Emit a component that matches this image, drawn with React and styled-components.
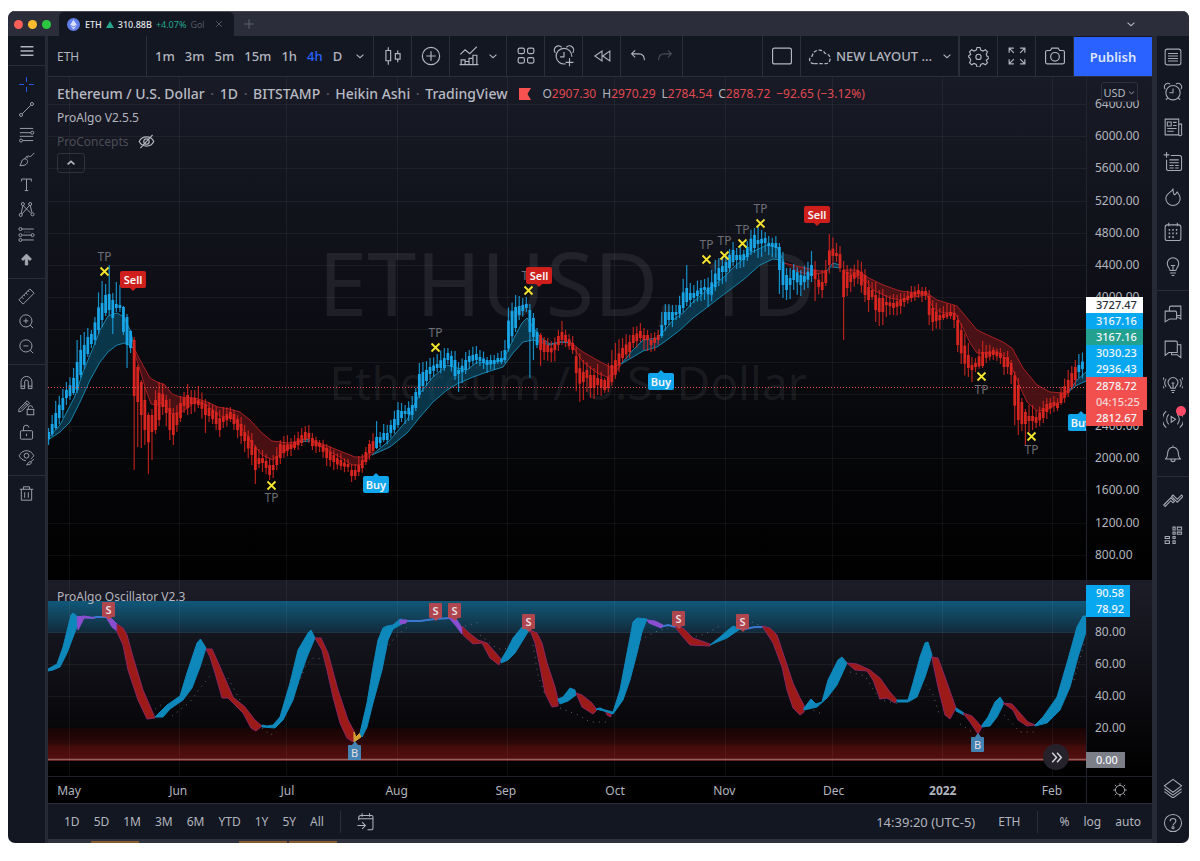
import React from "react";
import styled, { createGlobalStyle } from "styled-components";

const GlobalStyle = createGlobalStyle`
	* {
		box-sizing: border-box;
	}

	body {
		margin: 0;
		background: #ffffff;
		font-family: "Noto Sans", "Open Sans", sans-serif;
		color: #b2b5be;
	}

	button {
		font: inherit;
		color: inherit;
		background: none;
		border: 0;
		padding: 0;
		cursor: pointer;
	}
`;

// Line icons, all drawn on a 28px grid
const icons = {
	menu: <path d='M5 8h18M5 14h18M5 20h18' strokeWidth='2' />,
	cross: <path d='M14 2v8M14 18v8M2 14h8M18 14h8' />,
	line: (
		<>
			<circle cx='5' cy='23' r='2.5' />
			<circle cx='23' cy='5' r='2.5' />
			<path d='M7 21 21 7' />
		</>
	),
	fib: (
		<>
			<path d='M3 4h22M3 11h18M3 17h22M8 24h17' />
			<circle cx='23.5' cy='11' r='2.5' />
			<circle cx='5' cy='24' r='2.5' />
		</>
	),
	brush: (
		<path d='M3 24c3-2 2-10 7-11 5-.5 7 3 5 7-2 4-7 4-12 4zM16 12c-1-5 2-5 4-2l7-7M11 13l4-5' />
	),
	text: <path d='M6 9V5h16v4M14 5v19M11 24h6' />,
	pattern: (
		<>
			<path d='M5 21 8 8M9 8l12 12M19 7 7 21M20 7l3 12' />
			<circle cx='8' cy='5' r='2.5' />
			<circle cx='20' cy='5' r='2.5' />
			<circle cx='4.5' cy='23' r='2.5' />
			<circle cx='24' cy='22' r='2.5' />
		</>
	),
	forecast: (
		<>
			<path d='M6 5h20M7 15h15M7 23h19' />
			<path d='M10 10h10' strokeDasharray='1 2' />
			<circle cx='4' cy='5' r='2.5' />
			<circle cx='4' cy='15' r='2.5' />
			<circle cx='4' cy='23' r='2.5' />
			<circle cx='24' cy='15' r='2.5' />
		</>
	),
	arrow: <path d='M14 5 6 13l2 2.5 4-3V23h4V12.500l4 3 2-2.500z' fill='currentColor' />,
	ruler: (
		<path d='M1.5 19.5 19.5 1.5l7 7-18 18zM6 15l3 3M9.5 11.500l2 2M13 8l3 3M16.500 4.500l2 2' />
	),
	zoomIn: (
		<>
			<circle cx='13' cy='13' r='10' />
			<path d='M13 9v8M9 13h8M20 20l5 5' />
		</>
	),
	zoomOut: (
		<>
			<circle cx='13' cy='13' r='10' />
			<path d='M9 13h8M20 20l5 5' />
		</>
	),
	magnet: (
		<path d='M5 24V13a9 9 0 0 1 18 0v11h-6V13a3 3 0 0 0-6 0v11zM5 20h6M17 20h6' />
	),
	pencilLock: (
		<>
			<path d='M2 16 15 3l4 4L6 20l-5 1zM12 6l4 4M5 17 15 7' />
			<rect x='15' y='17' width='11' height='9' />
			<path d='M17 17v-2.5a3.500 3.500 0 0 1 7 0' />
		</>
	),
	lock: (
		<>
			<rect x='4' y='11' width='20' height='14' rx='2' />
			<path d='M9 11V7a4.500 4.500 0 0 1 9-1M14 16v4' />
		</>
	),
	eyeBrush: (
		<>
			<path d='M2 11c5-11 19-11 24 0-2 3-3 4-5 5.500M2 11c2 5 6 8 11 8' />
			<circle cx='14' cy='11' r='4' />
			<path d='M14 26c2 0 2-5 6-5s3 5-6 5zM21 21l5-4' />
		</>
	),
	trash: (
		<path d='M3 7h22M9 7V3h10v4M5.500 7v18h17V7M11 12v9M17 12v9' />
	),
	candles: (
		<path d='M8 3v4M8 20v5M5 7h6v13H5zM20 7v4M20 18v4M17 11h6v7h-6z' />
	),
	plusCircle: (
		<>
			<circle cx='14' cy='14' r='11' />
			<path d='M14 8v12M8 14h12' />
		</>
	),
	indicators: (
		<path d='M3 12l6-6 6 5 9-9M4 25v-6h5v6M9 25v-4h5v4M14 25v-8h5v8M19 25V13h5v12M2 25h24' />
	),
	grid: (
		<>
			<rect x='4' y='4' width='8' height='7' rx='2' />
			<rect x='16' y='4' width='8' height='7' rx='2' />
			<rect x='4' y='16' width='8' height='7' rx='2' />
			<rect x='16' y='16' width='8' height='7' rx='2' />
		</>
	),
	alarmPlus: (
		<>
			<path d='M16 24a10 10 0 1 1 8-9M14 9v6H9M21 17v10M16 22h10' />
			<path d='M3 10a5 5 0 0 1 8-7M25 10a5 5 0 0 0-8-7' />
		</>
	),
	replay: <path d='M14 7v14l-10-7zM25 7v14l-10-7z' />,
	undo: <path d='M10 6 5 11l5 5M5 11h10c5 0 8 3 8 9' />,
	redo: <path d='m18 6 5 5-5 5M23 11H13c-5 0-8 3-8 9' />,
	rect: <rect x='2' y='4' width='24' height='20' rx='2.5' />,
	cloud: (
		<path
			d='M7 23c-6 0-7-7-2-9 1-8 12-9 15-3 7 0 8 11 1 12z'
			strokeDasharray='4 2'
		/>
	),
	gear: (
		<>
			<path d='M12 2h4l1 3.500 3 1.200 3.200-1.700 2.800 2.800-1.700 3.200 1.200 3 3.500 1v0l-3.500 3-1.200 1 1.700 3.200-2.800 2.800-3.200-1.700-3 1.200-1 3.500h-4l-1-3.500-3-1.200L4.800 25 2 22.200 3.700 19l-1.200-3L0 14l2.500-2 1.200-1L2 7.800 4.800 5 8 6.700l3-1.200z' />
			<circle cx='14' cy='14.5' r='3.5' />
		</>
	),
	expand: (
		<path d='M4 10V4h6M4 4l6 6M18 4h6v6M24 4l-6 6M4 18v6h6M4 24l6-6M24 18v6h-6M24 24l-6-6' />
	),
	camera: (
		<>
			<path d='M4 7h4l2-3h8l2 3h4a2 2 0 0 1 2 2v13a2 2 0 0 1-2 2H4a2 2 0 0 1-2-2V9a2 2 0 0 1 2-2z' />
			<circle cx='14' cy='15' r='5.500' />
		</>
	),
	list: (
		<>
			<rect x='3' y='3' width='22' height='22' rx='3' />
			<path d='M7 9h14M7 12.500h14M7 16h14M7 19.500h14' />
		</>
	),
	alarm: (
		<>
			<circle cx='14' cy='15' r='10' />
			<path d='M14 9v6H9M7 22l-3 3M21 22l3 3M3 10a5 5 0 0 1 7-7M25 10a5 5 0 0 0-7-7' />
		</>
	),
	news: (
		<>
			<path d='M3 3h19v22H3zM22 10h4v13a2 2 0 0 1-4 2' />
			<path d='M6 7h5.500v5.500H6zM14 7.500h5M14 12h5M6 16h13M6 20h9' />
		</>
	),
	details: (
		<>
			<path d='M11 5h12a3 3 0 0 1 3 3v15a3 3 0 0 1-3 3H8a3 3 0 0 1-3-3V11M5 0v8M1 4h8' />
			<path d='M9 11h13M9 15h13M9 19h6M17 19h5M9 22.500h6M17 22.500h5' />
		</>
	),
	fire: (
		<path d='M14 2c0 5-10 6-10 14a10 10 0 0 0 20 0c0-4-2-6-4-9-1 1-2 3-4 4-2-2-2-5-2-9z' />
	),
	calendar: (
		<>
			<rect x='3' y='4' width='22' height='22' rx='3' />
			<path d='M8 1v5M20 1v5' />
			<path
				d='M8 11h2M13 11h2M18 11h2M8 16h2M13 16h2M18 16h2M8 21h2M13 21h2'
				strokeWidth='2.500'
			/>
		</>
	),
	bulb: (
		<path d='M10 19c0-3-4-5-4-10a8 8 0 0 1 16 0c0 5-4 7-4 10zM10 22.500h8M12 26h4M14 19v-7M11 12h6' />
	),
	chats: (
		<path d='M3 10h14a2 2 0 0 1 2 2v9H9l-6 4zM9 10V5a2 2 0 0 1 2-2h14v18l-5-3M19 16h6' />
	),
	chat: <path d='M3 3h15a2 2 0 0 1 2 2v14H8l-5 4zM20 8h5v18l-5-4H12v-3' />,
	bulbWave: (
		<path d='M11 20c0-3-4-4-4-8a7 7 0 0 1 14 0c0 4-4 5-4 8zM11 23h6M12.500 26h3M14 20v-7M12 12.500h4M4.500 7a9 9 0 0 0 0 11M23.500 7a9 9 0 0 1 0 11M1.500 5a13 13 0 0 0 0 15M26.500 5a13 13 0 0 1 0 15' />
	),
	stream: (
		<path d='M11.500 10.500v8l6-4zM8 7.500a10 10 0 0 0 0 14M20 7.500a10 10 0 0 1 0 14M4.500 3a15 15 0 0 0 0 23M23.500 3a15 15 0 0 1 0 23' />
	),
	bell: (
		<path d='M3 21c4-2 3-7 4-11 1-3 3-5.500 7-5.500s6 2.500 7 5.500c1 4 0 9 4 11zM11 21c0 5 6 5 6 0M14 2v2.500' />
	),
	waves: (
		<path d='m1 21 10-10 5 5-2 2-3-3-8 8zM12 9l2-2 6 6 6-6 2 2-8 8z' />
	),
	dom: (
		<path d='M14 3h3v4h-3zM20 3h6v4h-6zM14 10h3v3h-3zM20 10h6v3h-6zM3 16h6v3H3zM14 16h3v3h-3zM3 22h6v4H3zM14 22h3v4h-3z' />
	),
	layers: (
		<path d='m14 2 12 9-12 9-12-9zM2 15l12 9 12-9M2 19l12 9 12-9' />
	),
	help: (
		<>
			<circle cx='14' cy='14' r='12' />
			<path d='M10 11.500c0-5 8-5 8 0 0 3-4 3-4 6' />
			<circle cx='14' cy='20.500' r='1.500' />
		</>
	),
	goto: (
		<path d='M4 12V8a3 3 0 0 1 3-3h16a2 2 0 0 1 2 2v17a2 2 0 0 1-2 2h-6M4 10h21M9 2v5M20 2v5M2 20h11M9 15l5 5-5 5' />
	),
	sun: (
		<>
			<circle cx='14' cy='14' r='8' />
			<path d='M14 2v4M14 22v4M2 14h4M22 14h4M5 5l3 3M20 20l3 3M23 5l-3 3M8 20l-3 3' />
		</>
	),
	hidden: (
		<>
			<path d='M2 14c5-10 19-10 24 0-5 10-19 10-24 0zM4 25 24 3' strokeWidth='2' />
			<circle cx='14' cy='14' r='4.5' strokeWidth='2' />
		</>
	),
	down: <path d='m6 11 8 7 8-7' strokeWidth='2.5' />,
	up: <path d='m6 17 8-7 8 7' strokeWidth='4' />,
	close: <path d='m6 6 16 16M22 6 6 22' strokeWidth='2' />,
	plus: <path d='M14 3v22M3 14h22' strokeWidth='2' />,
	next: <path d='m6 5 8 9-8 9M15 5l8 9-8 9' strokeWidth='2.8' />,
};

const Icon = ({ name, size = 22 }) => (
	<IconSvg viewBox='0 0 28 28' width={size} height={size} aria-hidden='true'>
		{icons[name]}
	</IconSvg>
);

const months = ["May", "Jun", "Jul", "Aug", "Sep", "Oct", "Nov", "Dec", "2022", "Feb"];
const monthLines = [69, 179, 286, 397, 507, 614, 725, 832, 942, 1052];
const DAY = 3.565;

// x, body top, body bottom, wick top, wick bottom
const candleKeys = [
	[48, 432, 439, 428, 443], [52, 424, 434, 415, 436], [56, 413, 428, 403, 430],
	[62, 398, 410, 390, 418], [68, 390, 398, 382, 403], [73, 378, 393, 370, 395],
	[76, 362, 390, 340, 392], [80, 350, 375, 336, 378], [84, 345, 365, 332, 367],
	[88, 337, 354, 328, 357], [93, 334, 344, 332, 348], [97, 310, 336, 301, 340],
	[101, 303, 320, 281, 325], [105, 295, 313, 284, 316], [108, 294, 310, 267, 315],
	[112, 300, 318, 293, 333], [115, 304, 308, 283, 312], [119, 305, 308, 285, 310],
	[123, 307, 332, 306, 335], [126, 317, 345, 316, 368], [130, 331, 348, 330, 352],
	[133, 340, 396, 338, 470], [137, 367, 402, 365, 445], [140, 382, 415, 380, 448],
	[144, 400, 430, 390, 445], [147, 415, 448, 414, 480], [151, 415, 432, 410, 460],
	[155, 400, 430, 390, 432], [159, 393, 420, 382, 426], [162, 394, 407, 385, 415],
	[166, 400, 413, 395, 425], [170, 408, 430, 400, 440], [173, 414, 435, 408, 443],
	[177, 413, 425, 405, 432], [181, 403, 418, 398, 422], [185, 398, 406, 392, 412],
	[187, 395, 408, 385, 415], [192, 398, 404, 390, 412], [200, 400, 405, 388, 408],
	[205, 404, 415, 400, 433], [211, 408, 416, 402, 420], [215, 412, 424, 408, 430],
	[219, 418, 430, 410, 436], [224, 417, 422, 408, 428], [229, 412, 419, 407, 422],
	[235, 414, 424, 412, 430], [240, 424, 436, 418, 444], [245, 432, 441, 425, 450],
	[251, 440, 455, 435, 465], [254, 447, 470, 445, 483], [258, 458, 464, 450, 468],
	[264, 458, 463, 450, 470], [269, 465, 475, 460, 480], [272, 465, 470, 455, 477],
	[276, 456, 465, 448, 470], [280, 444, 458, 440, 462], [284, 445, 453, 436, 458],
	[290, 444, 449, 438, 455], [296, 442, 448, 436, 450], [300, 435, 443, 428, 446],
	[306, 432, 440, 428, 442], [309, 433, 439, 425, 442], [313, 438, 446, 434, 450],
	[320, 443, 447, 440, 452], [327, 448, 458, 444, 465], [333, 455, 462, 450, 468],
	[340, 460, 466, 455, 470], [347, 464, 467, 460, 472], [354, 470, 476, 464, 480],
	[360, 465, 472, 458, 476], [366, 452, 462, 448, 465], [371, 444, 453, 440, 458],
	[376, 437, 448, 423, 449], [380, 437, 443, 432, 446], [385, 433, 440, 425, 442],
	[392, 425, 433, 420, 438], [398, 410, 425, 402, 427], [402, 411, 418, 404, 422],
	[406, 411, 414, 405, 422], [411, 405, 415, 398, 420], [415, 392, 408, 388, 410],
	[419, 374, 395, 364, 398], [424, 372, 386, 362, 390], [430, 367, 374, 360, 380],
	[437, 364, 368, 355, 372], [443, 358, 368, 348, 371], [449, 353, 360, 350, 364],
	[455, 360, 376, 352, 380], [460, 370, 374, 362, 390], [465, 360, 370, 354, 374],
	[470, 356, 362, 350, 368], [475, 354, 360, 346, 362], [480, 357, 361, 350, 366],
	[487, 360, 365, 357, 372], [493, 360, 364, 355, 368], [500, 358, 362, 353, 364],
	[504, 350, 360, 340, 362], [507, 327, 355, 309, 358], [510, 314, 342, 308, 345],
	[515, 307, 328, 295, 332], [520, 306, 315, 298, 320], [525, 304, 308, 298, 312],
	[529, 310, 332, 304, 376], [533, 318, 337, 313, 360], [537, 332, 345, 330, 348],
	[540, 335, 350, 333, 365], [544, 340, 352, 338, 360], [550, 348, 352, 338, 358],
	[553, 348, 353, 345, 368], [558, 336, 345, 330, 350], [561, 332, 340, 322, 345],
	[566, 335, 342, 330, 345], [572, 343, 350, 338, 354], [575, 350, 365, 345, 380],
	[578, 365, 385, 350, 405], [582, 372, 382, 360, 398], [587, 370, 378, 362, 392],
	[592, 375, 388, 368, 398], [598, 378, 385, 365, 395], [604, 380, 390, 378, 393],
	[609, 377, 388, 365, 392], [613, 365, 382, 350, 385], [617, 357, 370, 340, 375],
	[622, 348, 358, 338, 362], [629, 342, 352, 335, 357], [635, 335, 343, 328, 348],
	[640, 331, 338, 323, 342], [646, 335, 340, 330, 350], [652, 340, 345, 334, 352],
	[658, 335, 340, 330, 345], [661, 325, 336, 314, 338], [666, 312, 325, 304, 330],
	[670, 312, 320, 305, 325], [678, 312, 315, 305, 320], [682, 295, 312, 287, 315],
	[685, 288, 302, 266, 306], [690, 293, 300, 283, 305], [695, 293, 298, 285, 303],
	[700, 288, 294, 280, 300], [705, 287, 290, 280, 300], [710, 288, 297, 276, 308],
	[713, 278, 293, 265, 296], [718, 268, 280, 258, 285], [724, 266, 272, 258, 284],
	[728, 258, 272, 252, 275], [732, 250, 262, 244, 266], [738, 255, 260, 248, 268],
	[745, 254, 260, 250, 265], [749, 242, 255, 235, 258], [753, 235, 248, 228, 252],
	[758, 240, 244, 228, 258], [765, 238, 243, 232, 252], [770, 243, 246, 238, 255],
	[776, 243, 248, 237, 258], [779, 247, 270, 243, 292], [782, 262, 285, 252, 298],
	[786, 275, 290, 270, 300], [790, 278, 285, 268, 298], [795, 270, 280, 265, 290],
	[800, 275, 285, 270, 296], [806, 276, 282, 268, 290], [811, 265, 276, 252, 282],
	[814, 266, 276, 254, 303], [817, 278, 285, 274, 292], [821, 282, 290, 272, 298],
	[825, 270, 283, 260, 285], [828, 254, 272, 236, 278], [831, 246, 256, 234, 268],
	[836, 253, 256, 243, 262], [839, 254, 268, 248, 272], [843, 270, 297, 261, 339],
	[846, 272, 288, 266, 296], [851, 275, 282, 268, 290], [857, 270, 276, 262, 284],
	[860, 270, 280, 257, 286], [864, 275, 295, 270, 302], [868, 287, 300, 280, 310],
	[872, 290, 297, 282, 300], [875, 295, 310, 284, 322], [881, 298, 312, 290, 325],
	[888, 302, 305, 295, 315], [893, 303, 308, 296, 315], [900, 300, 306, 294, 314],
	[905, 298, 302, 293, 305], [911, 293, 298, 288, 302], [918, 290, 294, 285, 298],
	[924, 291, 295, 287, 300], [929, 296, 315, 292, 325], [934, 308, 322, 300, 330],
	[939, 315, 320, 308, 327], [945, 314, 318, 306, 320], [950, 312, 316, 305, 318],
	[955, 313, 320, 306, 328], [959, 320, 345, 315, 350], [963, 338, 360, 330, 375],
	[967, 355, 368, 343, 376], [972, 365, 370, 358, 382], [976, 363, 367, 358, 370],
	[981, 352, 366, 343, 368], [987, 352, 358, 345, 362], [994, 350, 355, 347, 358],
	[1000, 353, 358, 350, 364], [1006, 357, 367, 352, 374], [1011, 363, 375, 360, 382],
	[1013, 368, 395, 365, 418], [1017, 385, 420, 380, 435], [1021, 402, 424, 398, 430],
	[1025, 412, 424, 410, 445], [1031, 416, 421, 405, 430], [1037, 417, 423, 412, 428],
	[1042, 408, 418, 402, 423], [1048, 404, 412, 398, 417], [1052, 402, 406, 398, 412],
	[1058, 403, 408, 398, 410], [1062, 393, 403, 388, 405], [1067, 380, 393, 370, 397],
	[1071, 373, 387, 368, 390], [1075, 367, 380, 360, 385], [1079, 365, 372, 355, 378],
	[1086, 358, 366, 350, 375],
];

const bullRanges = [[0, 132], [374, 538], [660, 815], [1077, 1100]];

const buildCandles = () => {
	const list = [];
	let k = 0;
	for (let i = 0; i < 291; i++) {
		const x = 48.6 + i * DAY;
		while (k < candleKeys.length - 2 && candleKeys[k + 1][0] < x) k++;
		const a = candleKeys[k];
		const b = candleKeys[k + 1];
		const t = Math.max(0, Math.min(1, (x - a[0]) / (b[0] - a[0])));
		// snap towards the closest key so that single spikes keep their height
		const s = t < 0.35 ? 0 : t > 0.65 ? 1 : t;
		const mix = (n) => a[n] + (b[n] - a[n]) * s;
		const wobble = ((i * 7) % 5) - 2;
		list.push({
			x: x,
			top: mix(1),
			bottom: Math.max(mix(2), mix(1) + 3),
			high: mix(3) - Math.max(0, wobble),
			low: mix(4) + Math.max(0, -wobble),
			bull: bullRanges.some(([from, to]) => x > from && x < to),
		});
	}
	return list;
};

const candles = buildCandles();

const ribbons = [
	{
		bull: true,
		top: "48,438 60,425 75,396 83,372 93,348 100,330 108,316 117,313 124,317 131,332 134,347",
		bottom: "134,349 131,346 125,343 117,345 108,352 100,362 90,380 80,402 70,422 60,432 48,440",
	},
	{
		top: "133,346 140,360 150,378 157,382 165,385 172,394 180,397 195,398 207,402 218,407 230,409 240,412 250,420 262,433 272,441 280,442 288,443 300,441",
		bottom: "300,441 295,445 283,452 273,460 262,455 252,443 243,430 232,418 220,416 205,404 195,402 182,412 172,414 162,403 157,405 151,404 146,390 140,370 133,348",
	},
	{ bull: true, top: "300,441 305,439 310,440", bottom: "310,441 300,442" },
	{
		top: "311,440 325,445 340,451 355,457 362,457 372,452",
		bottom: "372,454 360,465 352,465 340,457 325,449 311,441",
	},
	{
		bull: true,
		top: "372,455 390,440 407,420 420,393 433,377 447,365 457,368 467,370 477,362 487,363 503,360 513,340 522,323 527,318 533,327 540,337 550,344 560,342 571,342",
		bottom: "571,343 560,342 550,345 543,343 533,340 523,342 513,353 503,367 487,372 473,377 457,384 447,390 433,402 420,417 407,433 390,447 372,455",
	},
	{
		top: "570,342 583,352 597,360 610,367 615,367 621,363",
		bottom: "621,365 613,375 607,377 597,373 583,362 573,347",
	},
	{
		bull: true,
		top: "621,364 633,350 643,340 657,338 663,332 673,320 683,313 693,302 707,290 723,278 733,268 750,253 767,245 777,247 784,262",
		bottom: "784,263 780,260 773,259 760,265 743,280 723,295 710,305 693,318 680,330 667,340 657,347 643,351 633,357 621,364",
	},
	{ top: "784,263 800,267 820,271 827,271", bottom: "827,272 810,275 793,270" },
	{ bull: true, top: "827,271 833,263 840,265", bottom: "840,268 833,267" },
	{
		top: "843,270 857,270 867,277 883,285 900,291 917,293 927,293 937,300 957,306 967,318 977,330 990,336 1003,342 1012,348 1023,368 1037,385 1050,392 1063,393 1068,391",
		bottom: "1068,392 1060,402 1047,410 1037,411 1027,402 1020,387 1010,363 1000,353 990,353 977,353 970,343 963,328 955,313 943,313 933,308 927,295 913,297 900,300 890,298 873,290 867,282 857,277 843,271",
	},
	{ bull: true, top: "1068,392 1077,380 1086,372", bottom: "1086,381 1077,385 1068,392" },
];

const takeProfits = [
	[104, 271, 257], [271, 485, 498], [435, 347, 333], [528, 290, 276], [706, 259, 245],
	[724, 255, 241], [742, 243, 230], [760, 223, 209], [981, 376, 390], [1031, 436, 450],
];

const signals = [
	["Sell", 133, 280], ["Sell", 539, 276], ["Sell", 817, 215],
	["Buy", 376, 485], ["Buy", 661, 382], ["Buy", 1081, 423],
];

const BLUE = "#0e87bb";
const RED = "#9c1a18";
const PURPLE = "#8a4fd0";

const waves = [
	[BLUE, "48,669 57,664 63,647 71,615 73,613 78,617 78,624 67,653 60,667 53,670 48,671"],
	[PURPLE, "77,617 84,616 90,617 95,618 84,618 78,630"],
	[PURPLE, "106,617 112,619 117,624 118,632 112,627"],
	[RED, "117,624 123,628 127,635 133,657 143,690 153,713 155,718 147,719 138,700 128,670 123,645 117,632"],
	[BLUE, "155,717 167,705 180,696 187,673 197,643 200.5,639 206,648 200,667 192,688 183,700 170,709 163,717"],
	[RED, "206,649 212,649 217,660 227,683 233,697 245,707 255,720 262,726 256,731 251,728 243,713 235,705 228,698 222,698 215,673 210,657"],
	[BLUE, "262,725 267,726 273,725 280,717 290,683 298,650 308,633 311,630 315,638 307,657 300,677 293,700 283,720 275,728 262,727"],
	[RED, "315,638 321,638 328,653 338,690 348,720 355,733 353,742 347,738 340,723 333,697 327,670 322,650"],
	["#d3a031", "354,732 356,737 361,732 361,737 354,742"],
	[BLUE, "360,733 367,703 373,667 378,640 383,628 387,626 393,625 400,619 407,621 400,625 393,629 388,640 382,670 373,703 367,727 362,737"],
	[PURPLE, "400,620 407,620 406,623 400,624"],
	[PURPLE, "449,618 457,620 462,628 462,634 456,626 450,619"],
	[RED, "462,626 468,632 478,640 487,643 495,652 501,659 499,665 490,658 482,643 473,644 463,635"],
	[BLUE, "501,660 507,650 513,638 522,627 526,624 529,630 523,640 515,653 508,660 501,663"],
	[RED, "530,630 537,633 542,643 547,663 555,687 558,700 558,706 552,707 545,693 540,667 535,643"],
	[BLUE, "558,699 563,697 570,688 575,690 576,695 568,701 560,704"],
	[RED, "576,693 582,695 592,703 597,710 593,714 582,707"],
	[RED, "605,710 611,714 611,717 607,715"],
	[BLUE, "596,709 600,708 605,710 613,712 620,690 627,653 633,622 637,618 647,619 642,632 637,653 630,680 623,700 613,714 604,711 600,710"],
	[PURPLE, "647,620 655,621 663,625 661,628 649,623"],
	[RED, "675,627 683,628 693,638 710,644 710,646 690,645 683,637"],
	[BLUE, "710,645 720,637 728,630 733,626 740,629 727,638 717,642"],
	[RED, "762,626 770,628 777,635 783,653 793,683 800,698 804,705 804,712 800,715 793,708 787,690 782,667 773,643"],
	[BLUE, "804,708 811,699 816,704 822,702 828,680 838,660 842,657 847,663 837,685 827,698 817,707 804,710"],
	[RED, "847,663 857,664 870,670 880,678 890,692 897,700 895,703 887,698 880,699 873,680 867,671 855,670"],
	[BLUE, "897,700 908,700 913,683 920,657 925,643 928,642 932,655 925,677 917,697 908,702 897,702"],
	[RED, "932,657 938,658 945,677 952,697 956,708 950,719 945,715 938,687 933,663"],
	[BLUE, "956,708 964,713 964,715 956,711"],
	[RED, "963,713 972,716 982,727 978,734 970,722"],
	[BLUE, "982,725 988,717 995,702 1000,697 1004,703 997,717 990,726 982,727"],
	[RED, "1003,703 1012,704 1020,713 1028,722 1035,725 1027,726 1018,720 1013,710"],
	[BLUE, "1035,725 1043,717 1057,697 1067,663 1077,627 1083,616 1086,616 1086,632 1078,657 1070,687 1060,710 1047,723 1035,726"],
];

// stretches where both lines of the oscillator run together
const thinLines = [
	"78,617 84,617 92,618 96,617 108,617",
	"405,621 420,621 435,619 450,618",
	"660,627 668,625 676,627",
	"738,629 745,629 755,627 764,627",
];

const dotTrails = [
	"155,709 165,702", "172,716 190,702 200,688 211,675", "228,678 240,700 250,722",
	"262,728 270,735 277,732", "290,700 300,680 306,665 313,658 322,659", "382,655 395,637 410,625",
	"465,626 480,622", "480,635 492,645 502,650 515,645", "533,645 538,675 545,695",
	"560,708 578,715 590,722 610,722", "640,640 655,632 668,628", "690,638 705,634 720,626",
	"752,622 765,628", "808,708 822,714", "850,672 865,676 880,700 900,704", "922,680 932,692 940,716",
	"960,724 975,734", "1004,715 1020,732 1035,732", "1074,680 1085,640",
];

const ratings = [
	["S", 108, 609], ["S", 435, 610], ["S", 454, 610], ["S", 528, 621],
	["S", 678, 618], ["S", 742, 621], ["B", 354, 752], ["B", 977, 744],
];

const GridLines = ({ from, to, rows }) => (
	<g stroke='#ffffff' strokeOpacity='0.05'>
		{monthLines.map((x) => (
			<path key={x} d={`M${x + 0.5} ${from}V${to}`} />
		))}
		{rows.map((y) => (
			<path key={y} d={`M48 ${y}H1086`} />
		))}
	</g>
);

const PriceChart = () => (
	<ChartSvg viewBox='48 77 1038 503' role='img' aria-label='ETHUSD price'>
		<GridLines
			from={77}
			to={580}
			rows={Array.from({ length: 15 }, (_, i) => Math.round(104 + i * 32.2) + 0.5)}
		/>
		<Watermark x='567' y='316' $size={88}>ETHUSD, 1D</Watermark>
		<Watermark x='568' y='400' $size={46}>Ethereum / U.S. Dollar</Watermark>
		{ribbons.map((r) => (
			<g key={r.top} stroke={r.bull ? "#1684ab" : "#a62024"} fill='none'>
				<polygon
					points={`${r.top} ${r.bottom}`}
					fill={r.bull ? "#0b4d68" : "#6b1618"}
					fillOpacity='0.65'
					stroke='none'
				/>
				<polyline points={r.top} />
				<polyline points={r.bottom} />
			</g>
		))}
		{candles.map((c) => (
			<g key={c.x} fill={c.bull ? "#18a5e8" : "#d8251f"}>
				<rect x={c.x - 0.6} y={c.high} width='1.2' height={c.low - c.high} opacity='0.85' />
				<rect x={c.x - 1.4} y={c.top} width='2.8' height={c.bottom - c.top} />
			</g>
		))}
		<path d='M48 387.5H1086' stroke='#e8505a' strokeDasharray='1 2' />
		{takeProfits.map(([x, y, textY]) => (
			<g key={x}>
				<path
					d={`M${x - 3.5} ${y - 3.5}l8 8M${x + 4.5} ${y - 3.5}l-8 8`}
					stroke='#f5e52d'
					strokeWidth='1.8'
				/>
				<MarkText x={x + 0.5} y={textY + 4} $size={12} fill='#6d6e75'>TP</MarkText>
			</g>
		))}
		{signals.map(([label, x, y]) => (
			<g key={x} fill={label === "Buy" ? "#11a6ec" : "#cf1f1c"}>
				<rect x={x - 13} y={y - 9} width='26' height='17' rx='2' />
				<path
					d={
						label === "Buy"
							? `M${x - 4} ${y - 8}l4-4 4 4z`
							: `M${x - 4} ${y + 7}l4 4 4-4z`
					}
				/>
				<MarkText x={x} y={y + 4} fill='#f4f6f8' $bold>{label}</MarkText>
			</g>
		))}
	</ChartSvg>
);

const OscillatorChart = () => (
	<ChartSvg viewBox='48 580 1038 196' role='img' aria-label='ProAlgo Oscillator'>
		<defs>
			<linearGradient id='overbought' x1='0' x2='0' y1='0' y2='1'>
				<stop offset='0' stopColor='#10587a' />
				<stop offset='0.45' stopColor='#12445d' />
				<stop offset='1' stopColor='#122a3a' />
			</linearGradient>
			<linearGradient id='oversold' x1='0' x2='0' y1='0' y2='1'>
				<stop offset='0' stopColor='#170405' />
				<stop offset='0.45' stopColor='#2c0808' />
				<stop offset='0.55' stopColor='#420b0b' />
				<stop offset='1' stopColor='#58100f' />
			</linearGradient>
		</defs>
		<rect x='48' y='601' width='1038' height='32' fill='url(#overbought)' />
		<rect x='48' y='728' width='1038' height='33' fill='url(#oversold)' />
		<GridLines from={580} to={776} rows={[632.5, 664.5, 696.5]} />
		<path d='M48 759.5H1086' stroke='#94605e' strokeWidth='1.5' />
		{dotTrails.map((points) => (
			<polyline
				key={points}
				points={points}
				fill='none'
				stroke='#8d9fa3'
				strokeOpacity='0.6'
				strokeDasharray='1 5'
			/>
		))}
		{thinLines.map((points) => (
			<polyline key={points} points={points} fill='none' stroke='#3a78d0' strokeWidth='2' />
		))}
		{waves.map(([color, points]) => (
			<polygon
				key={points}
				points={points}
				fill={color}
				stroke={color === RED ? "#8e2560" : color}
				strokeWidth='1'
				strokeLinejoin='round'
			/>
		))}
		{ratings.map(([label, x, y]) => (
			<g key={x} fill={label === "B" ? "#4390c4" : "#c1464b"} fillOpacity='0.9'>
				<rect x={x - 6} y={y - 7} width='13' height='15' rx='1' />
				<path
					d={label === "B" ? `M${x - 2} ${y - 7}l3-4 3 4z` : `M${x - 2} ${y + 8}l3 3 3-3z`}
				/>
				<MarkText x={x + 0.5} y={y + 4.5} fill='#e8dfe4' $bold={label === "S"}>
					{label}
				</MarkText>
			</g>
		))}
	</ChartSvg>
);

const drawTools = ["cross", "line", "fib", "brush", "text", "pattern", "forecast", "arrow"];
const viewTools = ["ruler", "zoomIn", "zoomOut"];
const lockTools = ["magnet", "pencilLock", "lock", "eyeBrush"];
const marketPanels = ["list", "alarm", "news", "details", "fire", "calendar", "bulb"];
const socialPanels = ["chats", "chat", "bulbWave", "stream", "bell"];
const tradePanels = ["waves", "dom"];
const intervals = ["1m", "3m", "5m", "15m", "1h", "4h", "D"];
const ranges = ["1D", "5D", "1M", "3M", "6M", "YTD", "1Y", "5Y", "All"];
const prices = Array.from({ length: 15 }, (_, i) => (6400 - i * 400).toFixed(2));

const ToolButtons = ({ names, active }) =>
	names.map((name) => (
		<SideButton key={name} aria-label={name} $active={name === active}>
			<Icon name={name} size={17} />
		</SideButton>
	));

const PanelButtons = ({ names }) =>
	names.map((name) => (
		<PanelButton key={name} aria-label={name}>
			<Icon name={name} size={20} />
			{name === "stream" && <Badge />}
		</PanelButton>
	));

const App = () => {
	return (
		<>
			<GlobalStyle />
			<Window>
				<TabBar>
					<Lights>
						<Light $color='#fb5f57' />
						<Light $color='#fcbb2e' />
						<Light $color='#2bc840' />
					</Lights>
					<Tab>
						<svg width='13' height='13' viewBox='0 0 14 14' aria-hidden='true'>
							<circle cx='7' cy='7' r='7' fill='#627eea' />
							<path d='M7 2 3.5 7.2 7 9.2l3.5-2zM3.5 8.2 7 12.5l3.5-4.3L7 10.2z' fill='#d9e0fb' />
						</svg>
						<TabTitle>
							<b>ETH</b>
							<svg width='8' height='7' viewBox='0 0 8 7' aria-hidden='true'>
								<path d='M4 0 8 7H0z' fill='#26a68f' />
							</svg>
							<b>310.88B</b>
							<Up>+4.07%</Up>
							<Faded>Gold ·</Faded>
						</TabTitle>
						<TabAction aria-label='Close tab'>
							<Icon name='close' size={10} />
						</TabAction>
					</Tab>
					<TabAction aria-label='New tab'>
						<Icon name='plus' size={12} />
					</TabAction>
					<TabMenu aria-label='Tabs'>
						<Icon name='down' size={12} />
					</TabMenu>
				</TabBar>

				<Workspace>
					<LeftBar>
						<MenuButton aria-label='Menu'>
							<Icon name='menu' size={20} />
						</MenuButton>
						<ToolGroup $pad={6}>
							<ToolButtons names={drawTools} active='cross' />
						</ToolGroup>
						<ToolGroup $pad={5}>
							<ToolButtons names={viewTools} />
						</ToolGroup>
						<ToolGroup $pad={5}>
							<ToolButtons names={lockTools} />
						</ToolGroup>
						<ToolGroup $pad={5}>
							<ToolButtons names={["trash"]} />
						</ToolGroup>
					</LeftBar>

					<Main>
						<Header>
							<SymbolInput aria-label='Symbol' defaultValue='ETH' />
							<HeaderCell $pad={3}>
								{intervals.map((name) => (
									<Interval key={name} $active={name === "4h"}>{name}</Interval>
								))}
								<Chevron aria-label='More intervals'>
									<Icon name='down' size={12} />
								</Chevron>
							</HeaderCell>
							<IconCell aria-label='Chart type'><Icon name='candles' /></IconCell>
							<IconCell aria-label='Compare'><Icon name='plusCircle' /></IconCell>
							<HeaderCell $pad={8}>
								<button aria-label='Indicators'><Icon name='indicators' /></button>
								<Chevron aria-label='Favourite indicators'><Icon name='down' size={12} /></Chevron>
							</HeaderCell>
							<IconCell aria-label='Templates'><Icon name='grid' /></IconCell>
							<IconCell aria-label='Alert'><Icon name='alarmPlus' /></IconCell>
							<IconCell aria-label='Replay'><Icon name='replay' size={20} /></IconCell>
							<HeaderCell $pad={7}>
								<button aria-label='Undo'><Icon name='undo' size={20} /></button>
								<Redo aria-label='Redo' disabled><Icon name='redo' size={20} /></Redo>
							</HeaderCell>
							<HeaderSpacer />
							<IconCell aria-label='Select layout'><Icon name='rect' /></IconCell>
							<LayoutCell>
								<Icon name='cloud' size={24} />
								<LayoutName>NEW LAYOUT ...</LayoutName>
								<Icon name='down' size={12} />
							</LayoutCell>
							<IconCell aria-label='Settings'><Icon name='gear' size={21} /></IconCell>
							<IconCell aria-label='Fullscreen'><Icon name='expand' /></IconCell>
							<IconCell aria-label='Snapshot'><Icon name='camera' /></IconCell>
							<Publish>Publish</Publish>
						</Header>

						<ChartRow $tone='#181a26'>
							<ChartPane>
								<PriceChart />
								<Legend>
									<TitleLine>
										<h1>
											Ethereum / U.S. Dollar <i>·</i> 1D <i>·</i> BITSTAMP <i>·</i> Heikin Ashi{" "}
											<i>·</i> TradingView
										</h1>
										<svg width='12' height='12' viewBox='0 0 12 12' aria-hidden='true'>
											<path d='M0 0h12L8.5 6 12 12H0z' fill='#f7524f' />
										</svg>
										<Ohlc>
											<span>O<b>2907.30</b></span>
											<span>H<b>2970.29</b></span>
											<span>L<b>2784.54</b></span>
											<span>C<b>2878.72</b></span>
											<b>−92.65 (−3.12%)</b>
										</Ohlc>
									</TitleLine>
									<Study>ProAlgo V2.5.5</Study>
									<Study $muted>
										<span>ProConcepts</span>
										<button aria-label='Show ProConcepts'><Icon name='hidden' size={17} /></button>
									</Study>
									<Collapse aria-label='Collapse legend'><Icon name='up' size={12} /></Collapse>
								</Legend>
							</ChartPane>
							<Axis $top={19} $bottom={17}>
								{prices.map((price) => (
									<Tick key={price}>{price}</Tick>
								))}
								<Currency aria-label='Currency'>
									USD <Icon name='down' size={9} />
								</Currency>
								<TagStack $top={220}>
									<Tag $bg='#ffffff' $fg='#2b2e38'>3727.47</Tag>
									<Tag $bg='#08a8f0'>3167.16</Tag>
									<Tag $bg='#22a090'>3167.16</Tag>
									<Tag $bg='#08a8f0'>3030.23</Tag>
									<Tag $bg='#08a8f0'>2936.43</Tag>
									<Tag $bg='#f2504e' $wide>
										2878.72
										<br />
										<span>04:15:25</span>
									</Tag>
									<Tag $bg='#f2504e'>2812.67</Tag>
								</TagStack>
							</Axis>
						</ChartRow>

						<ChartRow $tone='#1d1d29'>
							<ChartPane>
								<OscillatorChart />
								<OscTitle>ProAlgo Oscillator V2.3</OscTitle>
								<Latest aria-label='Scroll to latest bar'><Icon name='next' size={15} /></Latest>
							</ChartPane>
							<Axis $top={44} $bottom={40}>
								<Tick>80.00</Tick>
								<Tick>60.00</Tick>
								<Tick>40.00</Tick>
								<Tick>20.00</Tick>
								<TagStack $top={5}>
									<Tag $bg='#08a8f0' $short>90.58</Tag>
									<Tag $bg='#08a8f0' $short>78.92</Tag>
								</TagStack>
								<TagStack $top={172}>
									<Tag $bg='#7d7f88' $short>0.00</Tag>
								</TagStack>
							</Axis>
						</ChartRow>

						<TimeRow>
							<TimeAxis>
								{months.map((month) => (
									<Month key={month} $bold={month === "2022"}>{month}</Month>
								))}
							</TimeAxis>
							<TimeSettings aria-label='Time axis settings'><Icon name='sun' size={16} /></TimeSettings>
						</TimeRow>

						<BottomBar>
							{ranges.map((range) => (
								<Range key={range}>{range}</Range>
							))}
							<BarRule />
							<button aria-label='Go to date'><Icon name='goto' size={19} /></button>
							<Spacer />
							<Clock>14:39:20 (UTC-5)</Clock>
							<Range>ETH</Range>
							<BarRule />
							<Range>%</Range>
							<Range>log</Range>
							<Range>auto</Range>
						</BottomBar>
						<Strip>
							<StripTab />
							<StripTab />
							<StripTab />
						</Strip>
					</Main>

					<RightBar>
						<PanelGroup $top={3} $bottom={6}>
							<PanelButtons names={marketPanels} />
						</PanelGroup>
						<PanelGroup $top={5} $bottom={5}>
							<PanelButtons names={socialPanels} />
						</PanelGroup>
						<PanelGroup $top={5} $last>
							<PanelButtons names={tradePanels} />
						</PanelGroup>
						<PanelGroup $bottom={3} $last>
							<PanelButtons names={["layers", "help"]} />
						</PanelGroup>
					</RightBar>
				</Workspace>
			</Window>
		</>
	);
};

export default App;

// Styled Components
const Window = styled.div`
	margin: 11px 11px 0 8px;
	border-radius: 7px;
	overflow: hidden;
	background: #131722;
`;

const IconSvg = styled.svg`
	display: block;
	flex: none;
	fill: none;
	stroke: currentColor;
	stroke-width: 1.5;
`;

const TabBar = styled.div`
	display: flex;
	align-items: stretch;
	height: 25px;
	border-top: 1px solid #474a52;
	background: #2b2e3a;
`;

const Lights = styled.div`
	display: flex;
	align-items: center;
	gap: 5px;
	width: 51px;
	padding-left: 6px;
`;

const Light = styled.span`
	width: 9px;
	height: 9px;
	border-radius: 50%;
	background: ${({ $color }) => $color};
`;

const Tab = styled.div`
	display: flex;
	align-items: center;
	width: 175px;
	padding-left: 8px;
	border-radius: 5px 5px 0 0;
	background: #131722;
`;

const TabTitle = styled.div`
	flex: 1;
	display: flex;
	align-items: center;
	gap: 4px;
	padding-left: 5px;
	overflow: hidden;
	white-space: nowrap;
	font-size: 9px;

	svg {
		flex: none;
	}

	b {
		font-weight: 500;
		color: #e4e6ea;
	}
`;

const Up = styled.span`
	color: #26a68f;
`;

const Faded = styled.span`
	color: #555862;
`;

const TabAction = styled.button`
	display: flex;
	align-items: center;
	justify-content: center;
	width: 30px;
	color: #686c76;
`;

const TabMenu = styled(TabAction)`
	margin-left: auto;
	margin-right: 43px;
	color: #b2b5be;
`;

const Workspace = styled.div`
	display: flex;
	align-items: stretch;
`;

const LeftBar = styled.nav`
	flex: none;
	width: 40px;
	border-right: 3px solid #272a36;
`;

const MenuButton = styled.button`
	display: flex;
	align-items: center;
	justify-content: center;
	width: 100%;
	height: 30px;
	border-bottom: 1px solid #2a2e39;
`;

const ToolGroup = styled.div`
	padding: ${({ $pad }) => $pad}px 0;

	& + & {
		border-top: 1px solid #2a2e39;
	}
`;

const SideButton = styled.button`
	display: flex;
	align-items: center;
	justify-content: center;
	width: 100%;
	height: 25px;
	color: ${({ $active }) => ($active ? "#2962ff" : "#a6a9b2")};
`;

const Main = styled.main`
	flex: 1;
	min-width: 0;
`;

const Header = styled.header`
	display: flex;
	height: 41px;
	border-bottom: 1px solid #2a2e39;
	font-size: 13px;
	font-weight: 500;
`;

const SymbolInput = styled.input`
	width: 99px;
	padding: 0 9px;
	border: 0;
	border-right: 1px solid #2a2e39;
	background: transparent;
	color: #b2b5be;
	font: 12px "Noto Sans", "Open Sans", sans-serif;
`;

const HeaderCell = styled.div`
	display: flex;
	align-items: center;
	padding-left: ${({ $pad }) => $pad}px;
	border-right: 1px solid #2a2e39;
`;

const Interval = styled.button`
	padding: 0 5px;
	color: ${({ $active }) => ($active ? "#2962ff" : "#b2b5be")};
`;

const Chevron = styled.button`
	display: flex;
	justify-content: center;
	width: 26px;
`;

const IconCell = styled.button`
	display: flex;
	align-items: center;
	justify-content: center;
	width: 38px;
	border-right: 1px solid #2a2e39;
`;

const Redo = styled.button`
	margin: 0 7px;
	color: #4a4e59;
`;

const Spacer = styled.div`
	flex: 1;
`;

const HeaderSpacer = styled(Spacer)`
	border-right: 1px solid #2a2e39;
`;

const LayoutCell = styled.button`
	display: flex;
	align-items: center;
	width: 159px;
	padding: 0 5px 0 7px;
	border-right: 2px solid #2a2e39;
`;

const LayoutName = styled.span`
	flex: 1;
	padding-left: 4px;
	text-align: left;
	white-space: nowrap;
	font-weight: 500;
`;

const Publish = styled.button`
	width: 78px;
	margin-top: 1px;
	background: #2962ff;
	color: #dfe6fb;
	font-weight: 600;
`;

const ChartRow = styled.section`
	display: flex;
	background: linear-gradient(${({ $tone }) => $tone}, #000000);
`;

const ChartPane = styled.div`
	position: relative;
	flex: 1;
	min-width: 0;
`;

const ChartSvg = styled.svg`
	display: block;
	width: 100%;
	height: auto;
`;

const Watermark = styled.text`
	font-size: ${({ $size }) => $size}px;
	text-anchor: middle;
	fill: #ffffff;
	fill-opacity: 0.08;
`;

const MarkText = styled.text`
	font-size: ${({ $size = 11 }) => $size}px;
	font-weight: ${({ $bold }) => ($bold ? 600 : 400)};
	text-anchor: middle;
	fill-opacity: 1;
`;

const Legend = styled.div`
	position: absolute;
	top: 5px;
	left: 9px;
`;

const TitleLine = styled.div`
	display: flex;
	align-items: center;
	height: 23px;
	white-space: nowrap;

	h1 {
		margin: 0 12px 0 0;
		font-size: 14px;
		font-weight: 500;
		color: #b8bac2;
	}

	i {
		padding: 0 2px;
		font-style: normal;
		color: #5a5d68;
	}
`;

const Ohlc = styled.div`
	display: flex;
	gap: 6px;
	padding-left: 11px;
	font-size: 12px;

	b {
		font-weight: 400;
		color: #e04a50;
	}
`;

const Study = styled.div`
	display: flex;
	align-items: center;
	gap: 9px;
	height: 24px;
	font-size: 12px;

	span {
		color: ${({ $muted }) => ($muted ? "#4b4d57" : "inherit")};
	}
`;

const Collapse = styled.button`
	display: flex;
	align-items: center;
	justify-content: center;
	width: 28px;
	height: 20px;
	border: 1px solid #2f323e;
	border-radius: 3px;
`;

const OscTitle = styled.div`
	position: absolute;
	top: 8px;
	left: 9px;
	font-size: 12px;
	line-height: 18px;
`;

const Latest = styled.button`
	position: absolute;
	right: 17px;
	bottom: 6px;
	display: flex;
	align-items: center;
	justify-content: center;
	width: 26px;
	height: 26px;
	border-radius: 50%;
	background: #26222c;
	color: #d0d2d8;
`;

const Axis = styled.div`
	position: relative;
	display: flex;
	flex-direction: column;
	justify-content: space-between;
	width: 66px;
	padding: ${({ $top, $bottom }) => `${$top}px 0 ${$bottom}px`};
	border-left: 1px solid #22252f;
`;

const Tick = styled.span`
	padding-left: 8px;
	font-size: 12px;
	line-height: 16px;
`;

const Currency = styled.button`
	position: absolute;
	top: 5px;
	left: 14px;
	display: flex;
	align-items: center;
	justify-content: center;
	gap: 1px;
	width: 37px;
	height: 20px;
	border: 1px solid #2f323e;
	border-radius: 3px;
	background: #171a26;
	font-size: 11px;
`;

const TagStack = styled.div`
	position: absolute;
	top: ${({ $top }) => $top}px;
	left: -1px;
	display: flex;
	flex-direction: column;
	align-items: flex-start;
`;

const Tag = styled.div`
	min-width: ${({ $wide, $short }) => ($wide ? 61 : $short ? 39 : 57)}px;
	padding: ${({ $wide }) => ($wide ? 1 : 0)}px 6px 0 10px;
	background: ${({ $bg }) => $bg};
	color: ${({ $fg }) => $fg || "#f3f6f8"};
	font-size: 11px;
	font-weight: 500;
	line-height: 16px;

	span {
		opacity: 0.8;
	}
`;

const TimeRow = styled.div`
	display: flex;
	height: 27px;
	border-top: 1px solid #1d2029;
	background: #000000;
`;

const TimeAxis = styled.div`
	flex: 1;
	display: flex;
	justify-content: space-between;
	align-items: center;
	padding: 0 14px 0 1px;
	font-size: 12px;
`;

const Month = styled.span`
	width: 40px;
	text-align: center;
	font-weight: ${({ $bold }) => ($bold ? 700 : 400)};
`;

const TimeSettings = styled.button`
	display: flex;
	align-items: center;
	justify-content: center;
	width: 66px;
	border-left: 1px solid #22252f;
`;

const BottomBar = styled.div`
	display: flex;
	align-items: center;
	height: 36px;
	padding: 0 4px 0 9px;
	border-top: 1px solid #2a2e39;
	font-size: 12px;
`;

const Range = styled.button`
	padding: 0 7px;
`;

const BarRule = styled.span`
	width: 1px;
	height: 22px;
	margin: 0 15px 0 9px;
	background: #2a2e39;
`;

const Clock = styled.button`
	margin-right: 16px;
	font-size: 13px;
`;

const Strip = styled.div`
	display: flex;
	gap: 2px;
	height: 4px;
	padding: 2px 0 0 43px;
	background: #2f313c;
`;

const StripTab = styled.span`
	width: 48px;
	background: #85592c;

	&:first-child {
		margin-right: 98px;
	}
`;

const RightBar = styled.aside`
	display: flex;
	flex-direction: column;
	flex: none;
	width: 37px;
	border-left: 5px solid #272a36;
	color: #a6a9b2;
`;

const PanelGroup = styled.div`
	padding: ${({ $top = 0, $bottom = 0 }) => `${$top}px 0 ${$bottom}px`};
	border-bottom: ${({ $last }) => ($last ? 0 : 1)}px solid #2a2e39;

	&:last-child {
		margin-top: auto;
	}
`;

const PanelButton = styled.button`
	position: relative;
	display: flex;
	align-items: center;
	justify-content: center;
	width: 100%;
	height: 35px;
`;

const Badge = styled.span`
	position: absolute;
	top: 5px;
	right: 3px;
	width: 10px;
	height: 10px;
	border-radius: 50%;
	background: #ff4a68;
`;
